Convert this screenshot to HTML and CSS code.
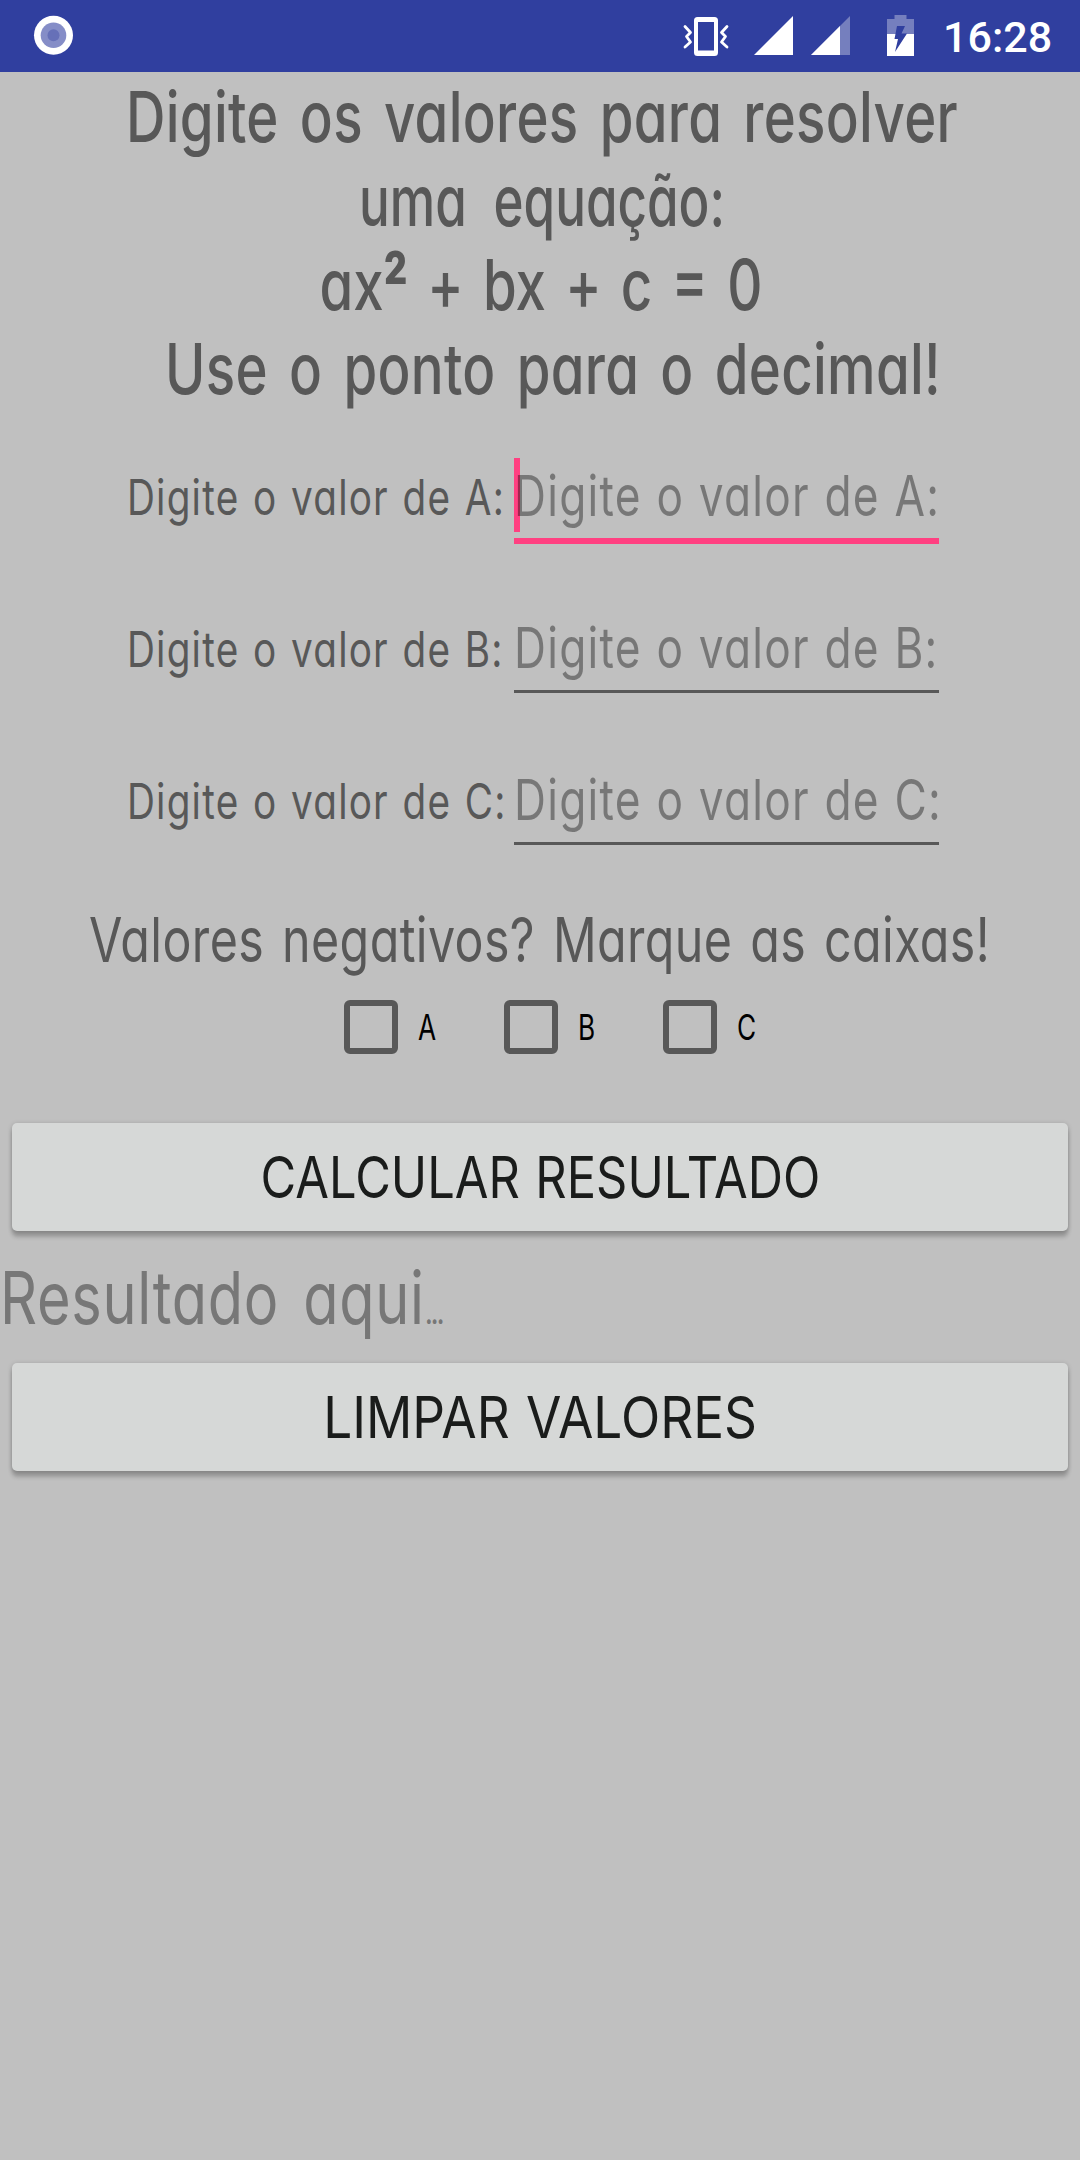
FILE: index.html
```html
<!DOCTYPE html>
<html lang="pt-BR">
	<head>
		<meta charset="UTF-8" />
		<meta name="viewport" content="width=device-width, initial-scale=1.0" />
		<title>Equação do segundo grau</title>
		<link rel="stylesheet" href="styles.css">
	</head>
	<body>
		<header class="status-bar">
			<svg class="icon-record" width="40" height="40" viewBox="0 0 40 40">
				<circle cx="20.500" cy="20.300" r="19.500" fill="#fff" />
				<circle cx="20.500" cy="20.300" r="12.800" fill="#858dc7" />
				<circle cx="20.500" cy="20.300" r="6" fill="#6670b8" />
			</svg>
			<div class="status-icons">
				<svg class="icon-vibrate" width="46" height="42" viewBox="0 0 46 42" fill="none" stroke="#fff">
					<rect x="13" y="4" width="20" height="35" rx="1.500" stroke-width="4" />
					<path d="M13 5h20M13 37.500h20" stroke-width="4" />
					<path d="M2 11.500l5.500 6-4 4 4 5.500L2 32M44 11.500l-5.500 6 4 4-4 5.500L44 32" stroke-width="2.800" stroke-linecap="round" stroke-linejoin="round" />
				</svg>
				<svg class="icon-signal" width="39" height="39" viewBox="0 0 39 39">
					<path d="M0 39L39 0v39z" fill="#fff" />
				</svg>
				<svg class="icon-signal-low" width="39" height="39" viewBox="0 0 39 39">
					<path d="M0 39L39 0v39z" fill="#757fbe" />
					<path d="M0 39L29 10v29z" fill="#fff" />
				</svg>
				<svg class="icon-battery" width="27" height="41" viewBox="0 0 27 41">
					<path d="M0 4h7.500V0h12v4H27v15H0z" fill="#757fbe" />
					<path d="M0 19h27v22H0z" fill="#fff" />
					<path d="M10 11h8l-3.500 7.500h5.500L8 37l3-13H7.500z" fill="#303f9f" />
				</svg>
				<span class="clock">16:28</span>
			</div>
		</header>

		<main>
			<h1 class="title">
				<span class="line">Digite os valores para resolver</span>
				<span class="line narrow">uma equação:</span>
				<span class="line formula">ax<span class="power">²</span> + bx + c = 0</span>
				<span class="line last">Use o ponto para o decimal!</span>
			</h1>

			<form class="fields">
				<div class="field focused">
					<label for="valor-a"><span>Digite o valor de A:</span></label>
					<span class="caret"></span>
					<input type="text" id="valor-a" placeholder="Digite o valor de A:" />
				</div>
				<div class="field">
					<label for="valor-b"><span>Digite o valor de B:</span></label>
					<input type="text" id="valor-b" placeholder="Digite o valor de B:" />
				</div>
				<div class="field">
					<label for="valor-c"><span>Digite o valor de C:</span></label>
					<input type="text" id="valor-c" placeholder="Digite o valor de C:" />
				</div>
			</form>

			<p class="question"><span>Valores negativos? Marque as caixas!</span></p>

			<div class="checks">
				<label class="check"><input type="checkbox" /><span>A</span></label>
				<label class="check"><input type="checkbox" /><span>B</span></label>
				<label class="check"><input type="checkbox" /><span>C</span></label>
			</div>

			<button class="btn calc"><span>CALCULAR RESULTADO</span></button>
			<p class="result"><span>Resultado aqui<small>...</small></span></p>
			<button class="btn clear"><span>LIMPAR VALORES</span></button>
		</main>
	</body>
</html>
```

FILE: styles.css
```css
* {
	box-sizing: border-box;
}
body {
	margin: 0;
	min-height: 2160px;
	overflow-x: hidden;
	background-color: #c0c0c0;
	color: #585858;
	font-family: Inter, sans-serif;
	font-feature-settings: "cv11";
}
.status-bar {
	display: flex;
	justify-content: space-between;
	height: 72px;
	padding: 15px 32px 0 33px;
	background-color: #303f9f;
}
.status-icons {
	display: flex;
}
.icon-signal {
	margin: 1px 18px 0 25px;
}
.icon-signal-low {
	margin: 1px 37px 0 0;
}
.clock {
	width: 105px;
	margin-left: 29px;
	color: #fff;
	font: 500 43px/44px Roboto, sans-serif;
	white-space: nowrap;
}

/* textos */
.title {
	margin: 0;
	padding-top: 3px;
	font-size: 70px;
	font-weight: 500;
	line-height: 84px;
	text-align: center;
	white-space: nowrap;
}
.line {
	display: block;
	height: 84px;
	margin-left: 4px;
	transform: scaleX(0.78);
	letter-spacing: 0.4px;
	word-spacing: 8px;
}
.line.narrow {
	transform: scaleX(0.73);
	letter-spacing: 0;
	word-spacing: 18px;
}
.line.formula {
	margin-left: 2px;
	letter-spacing: 0;
	word-spacing: 6px;
}
.line.last {
	margin-left: 26px;
	word-spacing: 8px;
}
.power {
	font: 700 84px/0 Roboto, sans-serif;
	vertical-align: -1px;
}

/* campos */
.fields {
	display: flex;
	flex-direction: column;
	gap: 66px;
	margin-top: 47px;
	padding-left: 127px;
}
.field {
	position: relative;
	display: flex;
	align-items: flex-start;
	height: 86px;
}
.field label {
	width: 387px;
	font-size: 49px;
	font-weight: 420;
	line-height: 79px;
	white-space: nowrap;
	letter-spacing: 1.5px;
	word-spacing: 2px;
}
.field label span {
	display: inline-block;
	transform: scaleX(0.79);
	transform-origin: left;
}
.field input {
	position: relative;
	flex: none;
	width: 538px;
	height: 83px;
	padding: 1px 0 5px;
	border: 0;
	border-bottom: 3px solid #585858;
	background: transparent;
	font: 370 56px/74px Inter, sans-serif;
	font-feature-settings: "cv11";
	letter-spacing: 1.6px;
	word-spacing: 1px;
	transform: scaleX(0.79);
	transform-origin: left;
	outline: none;
}
.field input::placeholder {
	color: rgba(0, 0, 0, 0.38);
	opacity: 1;
}
.field.focused input {
	height: 86px;
	border-bottom: 6px solid #ff4081;
}
.caret {
	position: absolute;
	left: 387px;
	top: 0;
	width: 6px;
	height: 74px;
	background-color: #ff4081;
}

.question {
	margin: 52px 0 0;
	font-size: 62px;
	font-weight: 400;
	line-height: 80px;
	text-align: center;
	white-space: nowrap;
	letter-spacing: 0.5px;
	word-spacing: 5px;
}
.question span {
	display: inline-block;
	margin: 0 -80px;
	transform: scaleX(0.78);
}
.checks {
	display: flex;
	margin-top: 20px;
	padding-left: 344px;
}
.check {
	display: flex;
	align-items: center;
	width: 159.5px;
	height: 54px;
	color: #000;
	font-size: 35px;
}
.check input {
	appearance: none;
	width: 54px;
	height: 54px;
	margin: 0 20px 0 0;
	border: 6px solid #585858;
	border-radius: 6px;
}
.check span {
	transform: scaleX(0.75);
	transform-origin: left;
}

/* botões */
.btn {
	display: block;
	width: 1056px;
	height: 108px;
	margin: 0 12px;
	padding: 0;
	border: 0;
	border-radius: 5px;
	background-color: #d6d8d7;
	box-shadow: 0 6px 4px rgba(0, 0, 0, 0.2), 0 1px 5px rgba(0, 0, 0, 0.2);
	color: #1a1c1b;
	font: 370 58px/108px Inter, sans-serif;
	white-space: nowrap;
	word-spacing: 2px;
}
.btn span {
	display: inline-block;
	transform: scaleX(0.842);
}
.btn.calc {
	margin-top: 69px;
}
.btn.clear span {
	transform: scaleX(0.885);
}
.result {
	margin: 0;
	height: 132px;
	color: #777;
	font-size: 73px;
	font-weight: 370;
	line-height: 134px;
	letter-spacing: 0.9px;
	word-spacing: 9px;
}
.result span {
	display: inline-block;
	transform: scaleX(0.79);
	transform-origin: left;
}
.result small {
	font-size: 36px;
	letter-spacing: -3px;
}
```
